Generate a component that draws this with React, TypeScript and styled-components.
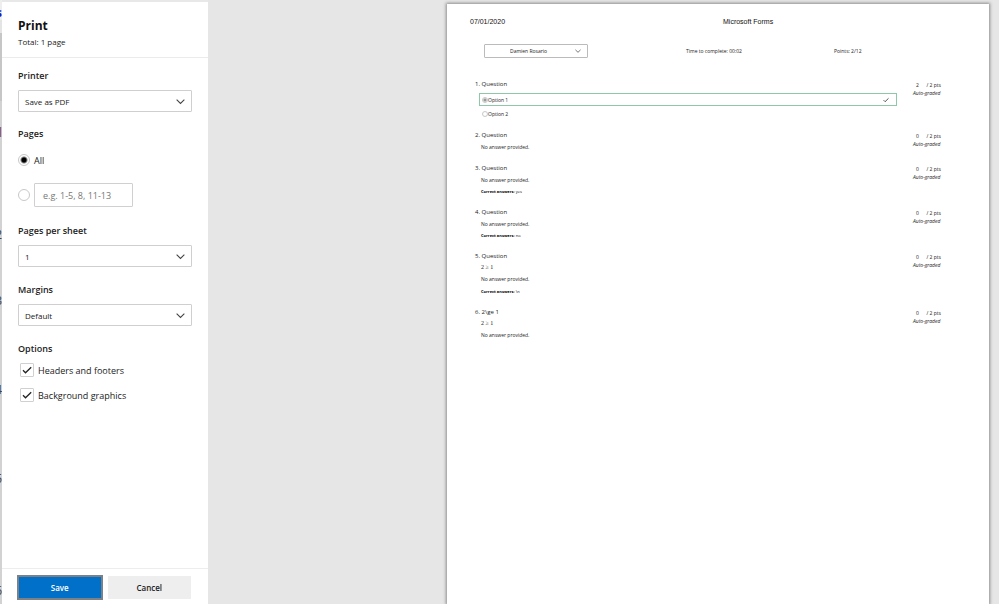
import React from "react";
import styled, { createGlobalStyle } from "styled-components";

const GlobalStyle = createGlobalStyle`
  * { box-sizing: border-box; }
  body {
    margin: 0;
    background: #e8e8e8;
    color: #222;
    font-family: "Open Sans", "Noto Sans", sans-serif;
    font-size: 9px;
  }
  button, input, select { font: inherit; color: inherit; margin: 0; }
`;

const Screen = styled.div`
  display: flex;
  height: 100vh;
  overflow: hidden;
`;

const PageEdge = styled.div`
  flex: none;
  width: 2px;
  display: flex;
  flex-direction: column;
  overflow: hidden;
  background: #d2d2d2;
`;

const EdgeMark = styled.div<{ $height: number; $color?: string; $bg?: string }>`
  flex: none;
  height: ${(p) => p.$height}px;
  display: flex;
  justify-content: flex-end;
  align-items: flex-end;
  line-height: 14px;
  font-size: 12px;
  color: ${(p) => p.$color ?? "#444"};
  background: ${(p) => p.$bg ?? "transparent"};
`;

const Dialog = styled.div`
  flex: 1;
  min-width: 0;
  display: flex;
`;

const Sidebar = styled.form`
  flex: none;
  width: 206px;
  margin-top: 2px;
  display: flex;
  flex-direction: column;
  background: #fff;
`;

const Heading = styled.header`
  padding: 15px 16px 8px;
  border-bottom: 1px solid #ebebeb;
`;

const Title = styled.h1`
  margin: 0;
  font-size: 12px;
  line-height: 18px;
  font-weight: 700;
  color: #111;
`;

const Total = styled.p`
  margin: 0;
  font-size: 8px;
  line-height: 14px;
`;

const Settings = styled.div`
  flex: 1;
  min-height: 0;
  padding: 9px 16px 0;
`;

const Section = styled.section<{ $gap?: number }>`
  display: flex;
  flex-direction: column;
  margin-bottom: ${(p) => p.$gap ?? 14}px;
`;

const Label = styled.label`
  line-height: 17px;
  margin-bottom: 6px;
  font-weight: 600;
`;

const GroupTitle = styled.h2`
  margin: 0 0 6px;
  font-size: 9px;
  line-height: 17px;
  font-weight: 600;
`;

const SelectBox = styled.div`
  display: grid;
  align-items: center;
  > * { grid-area: 1 / 1; }
  > svg { justify-self: end; margin-right: 7px; pointer-events: none; }
`;

const Select = styled.select`
  appearance: none;
  width: 100%;
  height: 22px;
  padding: 0 20px 0 6px;
  border: 1px solid #cfcfcf;
  border-radius: 1px;
  background: #fff;
  font-size: 8px;
`;

const RadioRow = styled.div<{ $height: number }>`
  display: flex;
  align-items: center;
  gap: 4px;
  height: ${(p) => p.$height}px;
  margin-top: ${(p) => (p.$height > 20 ? 14 : 4)}px;
`;

const Radio = styled.input.attrs({ type: "radio" })`
  appearance: none;
  flex: none;
  width: 12px;
  height: 12px;
  border: 1px solid #c8c8c8;
  border-radius: 50%;
  background: #fff;
  &:checked { background: radial-gradient(circle, #000 0 2px, #fff 4px); }
`;

const RangeInput = styled.input`
  width: 99px;
  height: 24px;
  padding: 0 8px;
  border: 1px solid #d0d0d0;
  border-radius: 1px;
  background: #fff;
  &::placeholder { color: #777; opacity: 1; }
`;

const CheckRow = styled.label`
  display: flex;
  align-items: center;
  gap: 4px;
  height: 16px;
  margin: 0 0 9px 2px;
`;

const OptionsTitle = styled(GroupTitle)`
  margin-bottom: 5px;
`;

const CheckBox = styled.span`
  display: grid;
  flex: none;
  width: 14px;
  height: 14px;
  place-items: center;
  > * { grid-area: 1 / 1; }
  > svg { pointer-events: none; }
`;

const Check = styled.input.attrs({ type: "checkbox" })`
  appearance: none;
  width: 14px;
  height: 14px;
  border: 1px solid #d0d0d0;
  border-radius: 1px;
  background: #fff;
`;

const Footer = styled.footer`
  display: grid;
  grid-template-columns: 1fr 1fr;
  gap: 4px;
  padding: 6px 16px 4px 15px;
  border-top: 1px solid #ededed;
`;

const Button = styled.button<{ $primary?: boolean }>`
  height: 25px;
  padding: 0;
  font-size: 8px;
  font-weight: 600;
  border: ${(p) => (p.$primary ? "2px solid #7b8187" : "1px solid #fff")};
  background: ${(p) => (p.$primary ? "#0070c9" : "#eee")};
  color: ${(p) => (p.$primary ? "#fff" : "#222")};
`;

const Preview = styled.main`
  flex: 1;
  min-width: 0;
  display: flex;
  padding: 4px 10px 0 239px;
  background: #e6e6e6;
`;

const Paper = styled.article`
  flex: 1;
  min-width: 0;
  padding: 11px 48px 0 23px;
  background: #fff;
  box-shadow: 0 0 3px 1px #8c8c8c;
  font-size: 5px;
`;

const PrintHeader = styled.div`
  display: grid;
  grid-template-columns: 253px 1fr;
  font-family: "Liberation Sans", sans-serif;
  font-size: 7px;
  line-height: 14px;
  color: #111;
`;

const Summary = styled.div`
  display: grid;
  grid-template-columns: 104px 98px 148px 1fr;
  align-items: center;
  margin: 15px 0 20px 14px;
`;

const Student = styled(Select)`
  height: 14px;
  padding: 0 18px 0 25px;
  border-color: #bbb;
  font-size: 5px;
`;

const Fact = styled.span<{ $column: number }>`
  grid-column: ${(p) => p.$column};
  line-height: 12px;
`;

const Question = styled.section`
  display: grid;
  grid-template-columns: 1fr 28px;
  column-gap: 16px;
  margin: 0 0 9px 5px;
`;

const QuestionTitle = styled.h3`
  margin: 0;
  font-size: 6px;
  line-height: 12px;
  font-weight: 400;
`;

const Answer = styled.p`
  margin: 0 0 0 6px;
  line-height: 12px;
`;

const Formula = styled(Answer)`
  font-family: "Liberation Serif", serif;
  font-size: 6px;
  line-height: 11px;
`;

const Correct = styled(Answer)<{ $spaced?: boolean }>`
  margin-top: ${(p) => (p.$spaced ? 1 : 0)}px;
  font-size: 4px;
  line-height: 11px;
  color: #000;
`;

const Choice = styled.div<{ $correct?: boolean }>`
  display: flex;
  align-items: center;
  justify-content: space-between;
  height: ${(p) => (p.$correct ? 13 : 12)}px;
  margin: ${(p) => (p.$correct ? "3px 0 2px 4px" : "0 0 0 4px")};
  padding: 0 7px 0 2px;
  border: 1px solid ${(p) => (p.$correct ? "#8fc7a9" : "transparent")};
`;

const ChoiceLabel = styled.label`
  display: flex;
  align-items: center;
`;

const SmallRadio = styled(Radio)`
  width: 6px;
  height: 6px;
  &:checked { background: radial-gradient(circle, #999 0 1px, #eee 2px); }
`;

const Score = styled.div`
  padding-top: 3px;
  line-height: 8px;
  white-space: nowrap;
`;

const Points = styled.div`
  display: flex;
  justify-content: space-between;
  padding-left: 3px;
`;

const Chevron = ({ size = 9 }: { size?: number }) => (
  <svg width={size} height={size} viewBox="0 0 10 10" fill="none" stroke="#444" strokeWidth="1.2" aria-hidden="true">
    <path d="M.7 3 5 7.2 9.3 3" />
  </svg>
);

const Tick = ({ size = 10 }: { size?: number }) => (
  <svg width={size} height={size} viewBox="0 0 10 10" fill="none" stroke="#222" strokeWidth="1.3" aria-hidden="true">
    <path d="m1 5.3 2.5 2.5L9.2 2.2" />
  </svg>
);

type Field = { id: string; label: string; value: string; gap?: number };

const Dropdown = ({ id, label, value, gap }: Field) => (
  <Section $gap={gap}>
    <Label htmlFor={id}>{label}</Label>
    <SelectBox>
      <Select id={id}><option>{value}</option></Select>
      <Chevron />
    </SelectBox>
  </Section>
);

const Option = ({ label }: { label: string }) => (
  <CheckRow>
    <CheckBox><Check defaultChecked /><Tick /></CheckBox>
    {label}
  </CheckRow>
);

type Item = {
  title: string;
  score: number;
  choices?: boolean;
  formula?: string;
  correct?: string;
};

const items: Item[] = [
  { title: "1. Question", score: 2, choices: true },
  { title: "2. Question", score: 0 },
  { title: "3. Question", score: 0, correct: "yes" },
  { title: "4. Question", score: 0, correct: "no" },
  { title: "5. Question", score: 0, formula: "2 ≥ 1", correct: "\\n" },
  { title: "6. 2\\ge 1", score: 0, formula: "2 ≥ 1" },
];

const QuestionItem = ({ item }: { item: Item }) => (
  <Question>
    <div>
      <QuestionTitle>{item.title}</QuestionTitle>
      {item.formula && <Formula>{item.formula}</Formula>}
      {item.choices ? (
        <>
          <Choice $correct>
            <ChoiceLabel><SmallRadio name="choice" defaultChecked />Option 1</ChoiceLabel>
            <Tick size={6} />
          </Choice>
          <Choice>
            <ChoiceLabel><SmallRadio name="choice" />Option 2</ChoiceLabel>
          </Choice>
        </>
      ) : (
        <Answer>No answer provided.</Answer>
      )}
      {item.correct && (
        <Correct $spaced={!!item.formula}><b>Correct answers:</b> {item.correct}</Correct>
      )}
    </div>
    <Score>
      <Points><span>{item.score}</span><span>/ 2 pts</span></Points>
      <em>Auto-graded</em>
    </Score>
  </Question>
);

export default function App() {
  return (
    <>
      <GlobalStyle />
      <Screen>
        <PageEdge aria-hidden="true">
          <EdgeMark $height={20} $color="#1a1acc" $bg="#eee"><b>s</b></EdgeMark>
          <EdgeMark $height={13} $bg="#e4e4e4" />
          <EdgeMark $height={68} $bg="#c6c6c6" />
          <EdgeMark $height={39} $color="#804050">l</EdgeMark>
          <EdgeMark $height={102}>2</EdgeMark>
          <EdgeMark $height={66}>3</EdgeMark>
          <EdgeMark $height={89}>4</EdgeMark>
          <EdgeMark $height={89}>5</EdgeMark>
          <EdgeMark $height={112}>6</EdgeMark>
        </PageEdge>
        <Dialog role="dialog" aria-label="Print">
          <Sidebar onSubmit={(e: React.FormEvent) => e.preventDefault()}>
            <Heading>
              <Title>Print</Title>
              <Total>Total: 1 page</Total>
            </Heading>
            <Settings>
              <Dropdown id="printer" label="Printer" value="Save as PDF" gap={13} />
              <Section>
                <GroupTitle>Pages</GroupTitle>
                <RadioRow $height={16}>
                  <Radio id="all" name="pages" defaultChecked />
                  <label htmlFor="all">All</label>
                </RadioRow>
                <RadioRow $height={26}>
                  <Radio name="pages" aria-label="Page range" />
                  <RangeInput placeholder="e.g. 1-5, 8, 11-13" aria-label="Pages to print" />
                </RadioRow>
              </Section>
              <Dropdown id="sheet" label="Pages per sheet" value="1" />
              <Dropdown id="margins" label="Margins" value="Default" />
              <Section>
                <OptionsTitle>Options</OptionsTitle>
                <Option label="Headers and footers" />
                <Option label="Background graphics" />
              </Section>
            </Settings>
            <Footer>
              <Button type="submit" $primary>Save</Button>
              <Button type="button">Cancel</Button>
            </Footer>
          </Sidebar>
          <Preview>
            <Paper>
              <PrintHeader>
                <span>07/01/2020</span>
                <span>Microsoft Forms</span>
              </PrintHeader>
              <Summary>
                <SelectBox>
                  <Student aria-label="Student"><option>Damien Rosario</option></Student>
                  <Chevron size={6} />
                </SelectBox>
                <Fact $column={3}>Time to complete: 00:02</Fact>
                <Fact $column={4}>Points: 2/12</Fact>
              </Summary>
              {items.map((item) => <QuestionItem key={item.title} item={item} />)}
            </Paper>
          </Preview>
        </Dialog>
      </Screen>
    </>
  );
}
